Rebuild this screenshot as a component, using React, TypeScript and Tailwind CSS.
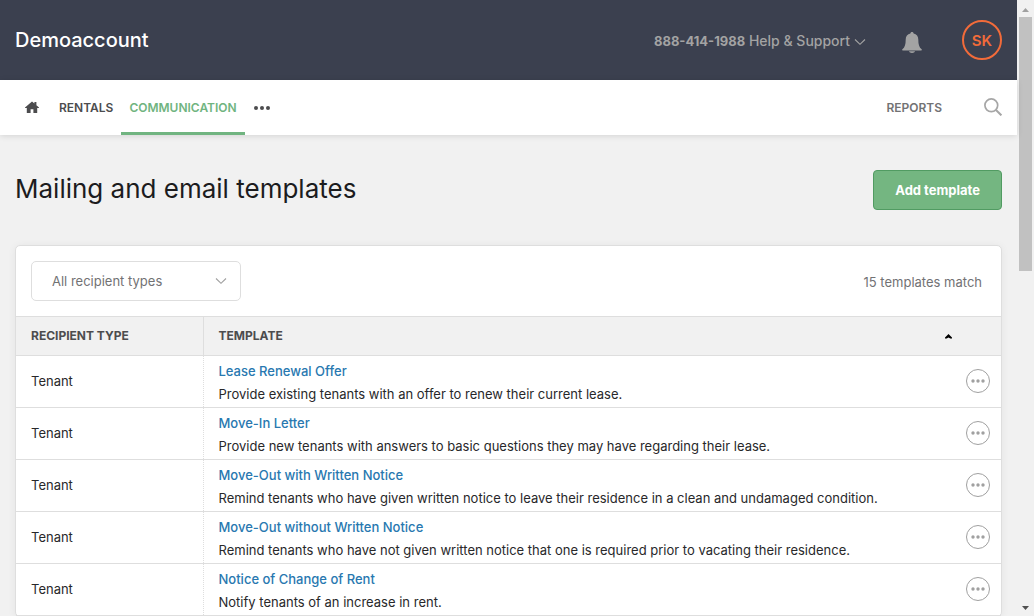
type Template = { recipient: string; name: string; description: string };

const templates: Template[] = [
  {
    recipient: "Tenant",
    name: "Lease Renewal Offer",
    description: "Provide existing tenants with an offer to renew their current lease.",
  },
  {
    recipient: "Tenant",
    name: "Move-In Letter",
    description: "Provide new tenants with answers to basic questions they may have regarding their lease.",
  },
  {
    recipient: "Tenant",
    name: "Move-Out with Written Notice",
    description:
      "Remind tenants who have given written notice to leave their residence in a clean and undamaged condition.",
  },
  {
    recipient: "Tenant",
    name: "Move-Out without Written Notice",
    description:
      "Remind tenants who have not given written notice that one is required prior to vacating their residence.",
  },
  {
    recipient: "Tenant",
    name: "Notice of Change of Rent",
    description: "Notify tenants of an increase in rent.",
  },
];

function ChevronDown({ className }: { className: string }) {
  return (
    <svg className={className} width="12" height="8" viewBox="0 0 12 8" fill="none" stroke="currentColor" aria-hidden="true">
      <path d="M1 1.5 6 6.3 11 1.5" strokeWidth="1.1" />
    </svg>
  );
}

function Header() {
  return (
    <header className="flex h-20 shrink-0 items-center justify-between bg-[#3b404f] px-[15px]">
      <a href="#" className="text-xl font-medium text-white">
        Demoaccount
      </a>
      <div className="flex items-center">
        <button type="button" className="flex items-center gap-1 pt-0.5 text-[#a3a3a3]">
          <span className="text-sm font-medium">
            <span className="text-[13px] font-bold">888-414-1988</span> Help &amp; Support
          </span>
          <ChevronDown className="mt-0.5" />
        </button>
        <button type="button" aria-label="Notifications" className="ml-9 pt-1.5 text-[#a3a3a3]">
          <svg width="20" height="22" viewBox="0 0 20 22" fill="currentColor" aria-hidden="true">
            <path d="M10 0c-1 0-1.6.6-1.6 1.5C5.4 2.1 3.700 4.400 3.700 7.400c0 5-.9 8-3.300 9.900-.4.4-.4 1.200.4 1.200h18.400c.8 0 .8-.8.4-1.200-2.400-1.900-3.300-4.900-3.300-9.900 0-3-1.700-5.300-4.700-5.900C11.600.6 11 0 10 0Z" />
            <path d="M7 19.300h6c-.3 1-1.500 1.700-3 1.700s-2.700-.7-3-1.700Z" />
          </svg>
        </button>
        <button
          type="button"
          className="ml-10 size-10 rounded-full border-2 border-[#f26b3a] pt-0.5 text-[15px] font-semibold text-[#f26b3a]"
        >
          SK
        </button>
      </div>
    </header>
  );
}

function Nav() {
  return (
    <nav className="relative flex h-[55px] shrink-0 items-center bg-white px-[15px] text-xs font-semibold text-[#4c4c4e] shadow-[0_1px_6px_rgba(0,0,0,0.12)]">
      <a href="#" aria-label="Home" className="ml-2.5 pb-0.5">
        <svg width="14" height="12" viewBox="0 0 14 12" fill="currentColor" aria-hidden="true">
          <path d="M7 .4 9.400 2.500V1h2v3.200L14 6.600v.5h-1.800V12H8.400V8.200H5.600V12H1.800V7.100H0v-.5Z" />
        </svg>
      </a>
      <a href="#" className="ml-5 flex h-full items-center">
        RENTALS
      </a>
      <a href="#" className="ml-2 flex h-full items-center border-b-[3px] border-[#70b480] px-2 pt-[3px] text-[#70b480]">
        COMMUNICATION
      </a>
      <button type="button" aria-label="More" className="ml-2">
        <svg width="18" height="6" viewBox="0 0 18 6" fill="currentColor" aria-hidden="true">
          <circle cx="3" cy="3" r="2" />
          <circle cx="9" cy="3" r="2" />
          <circle cx="15" cy="3" r="2" />
        </svg>
      </button>
      <a href="#" className="ml-auto text-[#727274]">
        REPORTS
      </a>
      <button type="button" aria-label="Search" className="ml-[42px] pb-0.5 text-[#a6a6a6]">
        <svg width="18" height="18" viewBox="0 0 18 18" fill="none" stroke="currentColor" aria-hidden="true">
          <circle cx="7.300" cy="7.300" r="6.400" strokeWidth="1.700" />
          <path d="m12 12 5.400 5.400" strokeWidth="2" />
        </svg>
      </button>
    </nav>
  );
}

function TemplateRow({ template }: { template: Template }) {
  return (
    <tr className="h-[52px] border-b border-[#dedede]">
      <td className="border-r border-dotted border-[#dedede] px-[15px]">{template.recipient}</td>
      <td className="px-[15px] pt-0.5">
        <a href="#" className="block leading-[23px] font-medium text-[#2878b0]">
          {template.name}
        </a>
        <p className="leading-[23px]">{template.description}</p>
      </td>
      <td className="pr-[11px] pb-0.5">
        <button
          type="button"
          aria-label={`Actions for ${template.name}`}
          className="ml-auto flex size-6 items-center justify-center rounded-full border border-[#a0a0a0] text-[#a0a0a0]"
        >
          <svg width="14" height="4" viewBox="0 0 14 4" fill="currentColor" aria-hidden="true">
            <circle cx="2" cy="2" r="1.700" />
            <circle cx="7" cy="2" r="1.700" />
            <circle cx="12" cy="2" r="1.700" />
          </svg>
        </button>
      </td>
    </tr>
  );
}

function TemplatesCard() {
  return (
    <section className="rounded-[5px] border border-[#dedede] bg-white shadow-[0_1px_8px_rgba(0,0,0,0.06)]">
      <div className="flex items-center justify-between px-[15px] py-[15px]">
        <div className="relative">
          <select
            aria-label="Recipient type"
            className="h-10 w-[210px] appearance-none rounded-[5px] border border-[#dedede] bg-white pt-0.5 pl-5 text-[13px] text-[#727274]"
          >
            <option>All recipient types</option>
          </select>
          <ChevronDown className="pointer-events-none absolute top-4 right-3.5 text-[#a0a0a0]" />
        </div>
        <p className="pt-1 pr-1 text-[13px] text-[#727274]">15 templates match</p>
      </div>
      <table className="w-full table-fixed border-collapse text-left text-[13px] text-[#28282a]">
        <colgroup>
          <col className="w-[187px]" />
          <col />
          <col className="w-[60px]" />
        </colgroup>
        <thead>
          <tr className="h-[39px] border-y border-[#dedede] bg-[#f1f1f1] text-xs text-[#4c4c4e]">
            <th className="border-r border-[#dedede] px-[15px] font-bold">RECIPIENT TYPE</th>
            <th colSpan={2} aria-sort="ascending" className="pr-[49px] pl-[15px] font-bold">
              <button type="button" className="flex w-full items-center justify-between">
                TEMPLATE
                <svg width="7" height="5" viewBox="0 0 7 5" fill="#000" aria-hidden="true">
                  <path d="M3.500 0 7 3.400v1H5.300L3.500 3.600 1.700 4.400H0v-1Z" />
                </svg>
              </button>
            </th>
          </tr>
        </thead>
        <tbody>
          {templates.map((template) => (
            <TemplateRow key={template.name} template={template} />
          ))}
        </tbody>
      </table>
    </section>
  );
}

function ScrollBar() {
  return (
    <div className="flex w-[17px] shrink-0 flex-col items-center justify-between bg-[#f1f1f1]" aria-hidden="true">
      <div className="flex w-full flex-col items-center">
        <div className="flex h-[17px] items-center pt-0.5">
          <svg width="7" height="4" viewBox="0 0 7 4" fill="#a0a0a0">
            <path d="M3.500 0 7 4H0Z" />
          </svg>
        </div>
        <div className="h-[254px] w-[13px] bg-[#c1c1c1]" />
      </div>
      <div className="flex h-[17px] items-center">
        <svg width="7" height="4" viewBox="0 0 7 4" fill="#505050">
          <path d="M0 0h7L3.500 4Z" />
        </svg>
      </div>
    </div>
  );
}

export default function App() {
  return (
    <div className="flex h-screen overflow-hidden bg-[#f1f1f1] font-['Inter',sans-serif]">
      <div className="flex min-w-0 flex-1 flex-col">
        <Header />
        <Nav />
        <main className="px-[15px] pt-[35px]">
          <div className="mb-[35px] flex items-center justify-between">
            <h1 className="pb-0.5 text-[26px] leading-9 font-normal text-[#1c1c1e]">Mailing and email templates</h1>
            <button
              type="button"
              className="h-10 rounded-[4px] border border-[#519b62] bg-[#74b681] px-[21px] pt-0.5 text-[13px] font-bold text-white"
            >
              Add template
            </button>
          </div>
          <TemplatesCard />
        </main>
      </div>
      <ScrollBar />
    </div>
  );
}
